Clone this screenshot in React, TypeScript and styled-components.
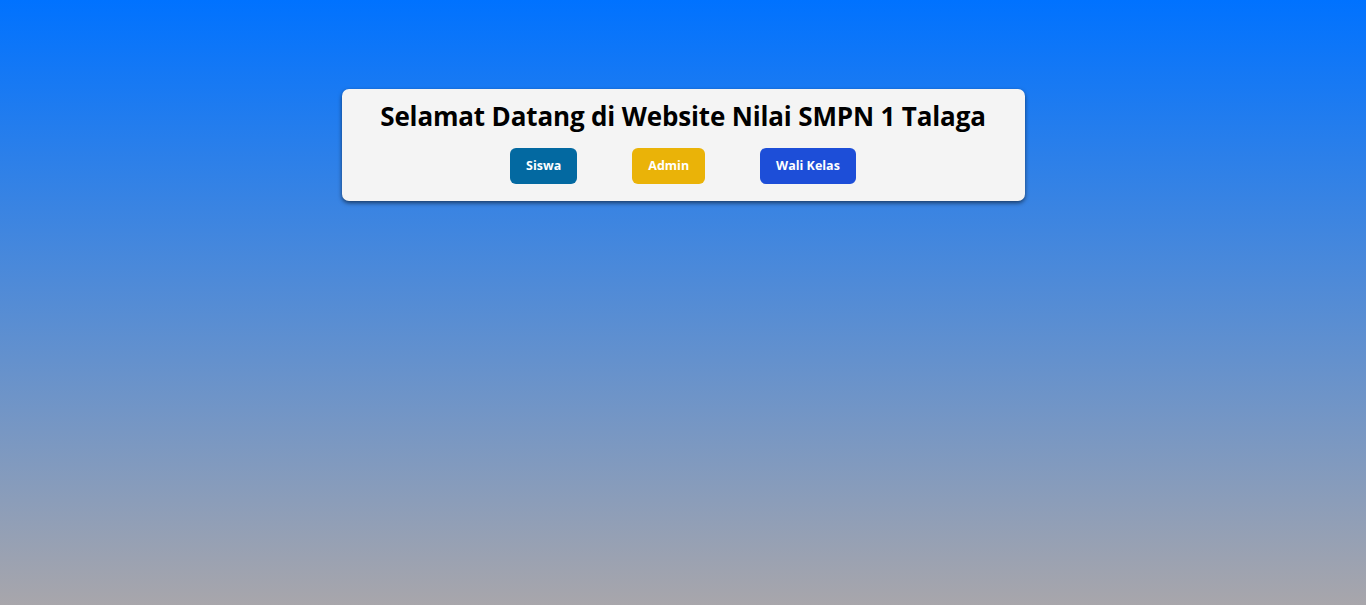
import { createGlobalStyle, styled } from "styled-components";

const GlobalStyle = createGlobalStyle`
  html, body {
    margin: 0;
    padding: 0;
    height: 100%;
  }
  body {
    font-family: "Open Sans", "Noto Sans", sans-serif;
    background: linear-gradient(to bottom, #0072ff, #a8a6ab);
    min-height: 605px;
  }
`;

const Page = styled.main`
  display: flex;
  justify-content: center;
  padding-top: 89px;
`;

const Card = styled.section`
  width: 50%;
  box-sizing: border-box;
  background-color: #f4f4f4;
  border-radius: 7px;
  box-shadow: 0 2px 4px rgba(0, 0, 0, 0.55);
  padding: 9px 16px 17px;
  text-align: center;
`;

const Title = styled.h1`
  margin: 0 0 14px;
  font-size: 26px;
  line-height: 36px;
  font-weight: 700;
  color: #000;
  letter-spacing: -0.15px;
`;

const Actions = styled.div`
  display: flex;
  justify-content: center;
  gap: 55px;
`;

const RoleButton = styled.button<{ $bg: string }>`
  font-family: inherit;
  font-size: 12.5px;
  font-weight: 700;
  line-height: 20px;
  color: #fff;
  background-color: ${(p) => p.$bg};
  border: none;
  border-radius: 6px;
  padding: 8px 16px;
  cursor: pointer;
`;

export default function App() {
  return (
    <>
      <GlobalStyle />
      <Page>
        <Card>
          <Title>Selamat Datang di Website Nilai SMPN 1 Talaga</Title>
          <Actions>
            <RoleButton $bg="#0369a1">Siswa</RoleButton>
            <RoleButton $bg="#eab308">Admin</RoleButton>
            <RoleButton $bg="#1d4ed8">Wali Kelas</RoleButton>
          </Actions>
        </Card>
      </Page>
    </>
  );
}
